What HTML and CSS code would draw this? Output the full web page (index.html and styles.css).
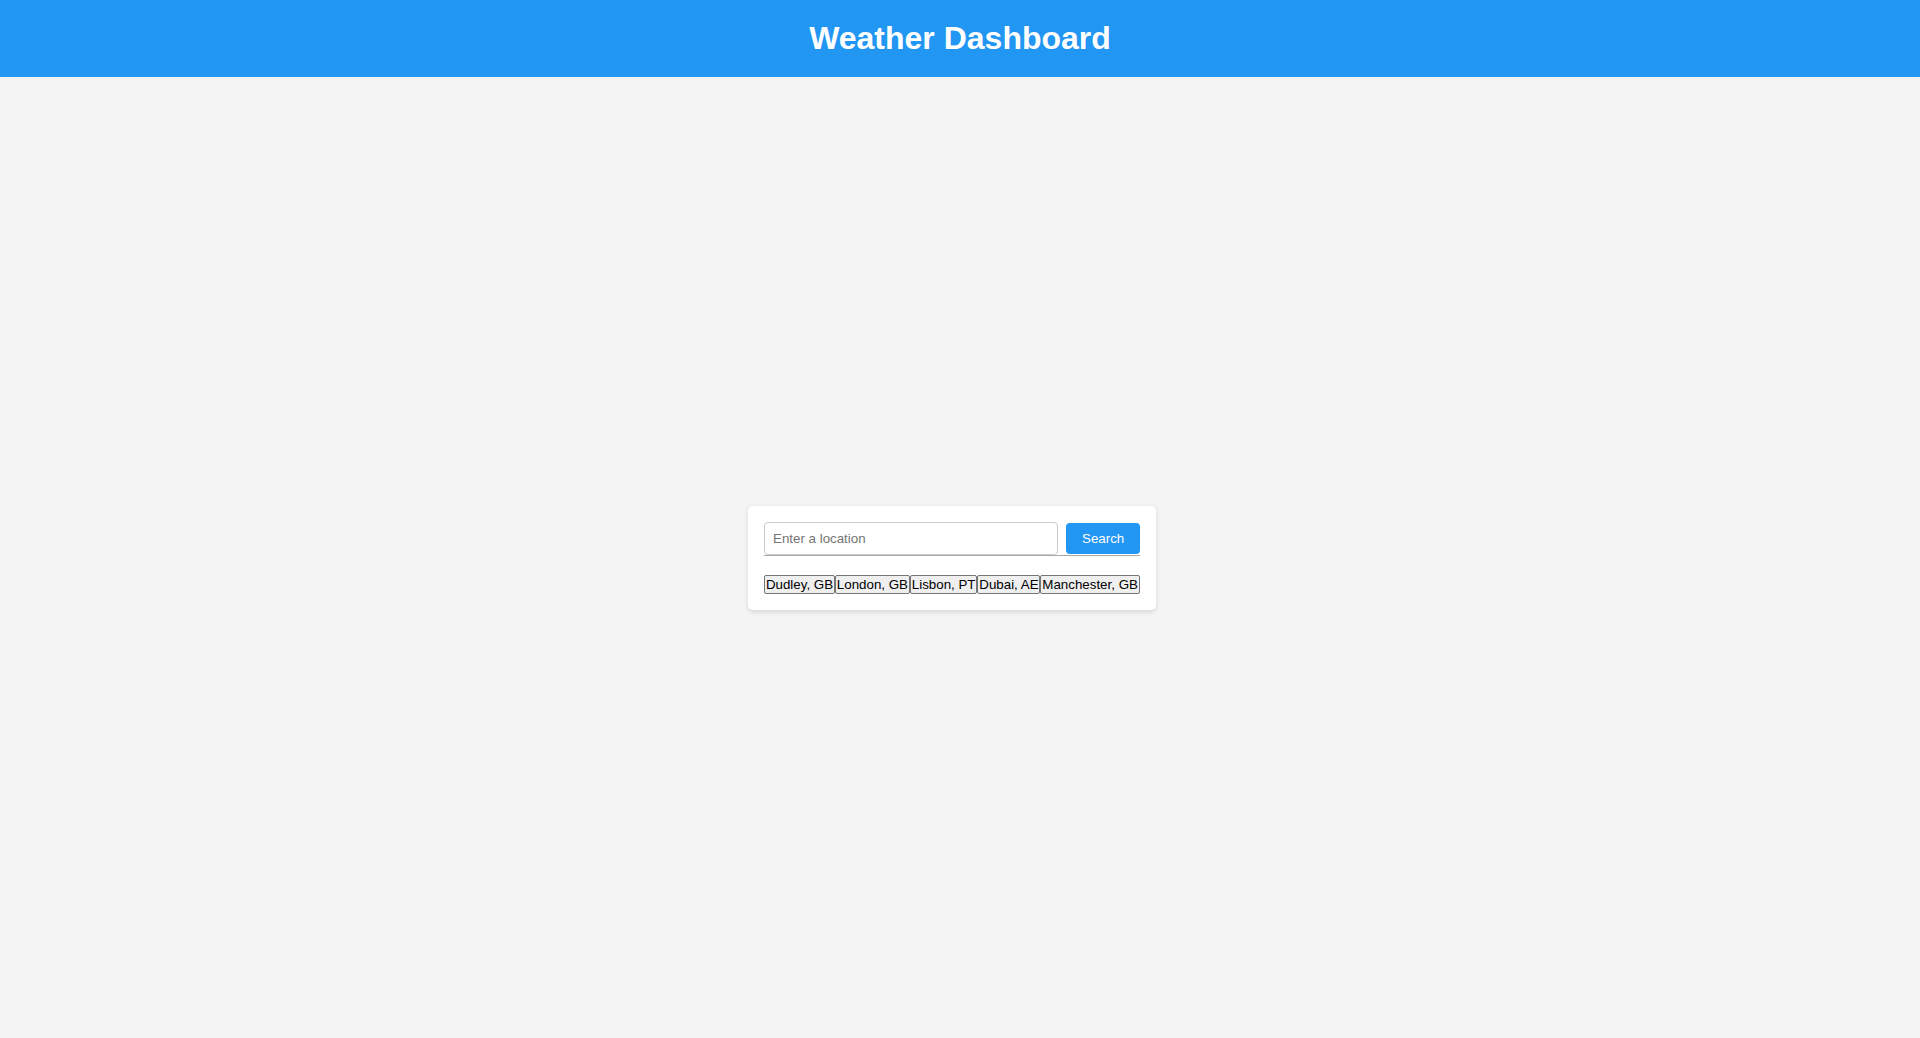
FILE: index.html
```html
<!DOCTYPE html>
<html>
<head>
<meta charset="utf-8">
<title>Weather Dashboard</title>
<link rel="stylesheet" href="styles.css">
</head>
<body>
<header class="header"><h1 class="title">Weather Dashboard</h1></header>
<main class="main">
  <section class="card">
    <div class="search-row">
      <input class="search-input" type="text" placeholder="Enter a location">
      <button class="search-btn">Search</button>
    </div>
    <div class="recent"><button class="recent-btn">Dudley, GB</button><button class="recent-btn">London, GB</button><button class="recent-btn">Lisbon, PT</button><button class="recent-btn">Dubai, AE</button><button class="recent-btn">Manchester, GB</button></div>
  </section>
  <section class="weather"></section>
</main>
</body>
</html>
```
FILE: styles.css
```css
html, body {
  margin: 0;
  padding: 0;
  height: 100%;
}
body {
  background: #f4f4f4;
  font-family: "Liberation Sans", Arial, sans-serif;
  display: flex;
  flex-direction: column;
}
.header {
  background: #2196f3;
  padding: 20px 0;
  text-align: center;
}
.title {
  margin: 0;
  color: #fff;
  font-size: 32px;
  font-weight: bold;
  line-height: 37px;
}
.main {
  flex: 1;
  display: flex;
  justify-content: center;
  align-items: center;
  gap: 16px;
}
.card {
  background: #fff;
  border-radius: 5px;
  box-shadow: 0 2px 5px rgba(0,0,0,0.12);
  padding: 16px;
  width: 376px;
}
.search-row {
  display: flex;
  align-items: center;
  gap: 8px;
  border-bottom: 1px solid #a8a8a8;
}
.search-input {
  flex: 1;
  min-width: 0;
  font-family: "Liberation Sans", Arial, sans-serif;
  font-size: 13.333px;
  line-height: 15px;
  height: 33px;
  box-sizing: border-box;
  padding: 8px;
  border: 1px solid #ccc;
  border-radius: 4px;
  color: #000;
}
.search-input::placeholder {
  color: #757575;
}
.search-btn {
  background: #2196f3;
  color: #fff;
  border: none;
  border-radius: 4px;
  font-family: "Liberation Sans", Arial, sans-serif;
  font-size: 13.333px;
  line-height: 15px;
  padding: 8px 16px;
  width: 74px;
  height: 31px;
}
.recent {
  display: flex;
  margin-top: 19px;
}
.recent-btn {
  flex-shrink: 0;
  white-space: nowrap;
  font-family: "Liberation Sans", Arial, sans-serif;
  font-size: 13.333px;
  line-height: 15px;
  padding: 1px 0.9px;
  border: 1px solid #767676;
  border-radius: 2px;
  background: #efefef;
  color: #000;
  height: 19px;
  box-sizing: border-box;
}
```
